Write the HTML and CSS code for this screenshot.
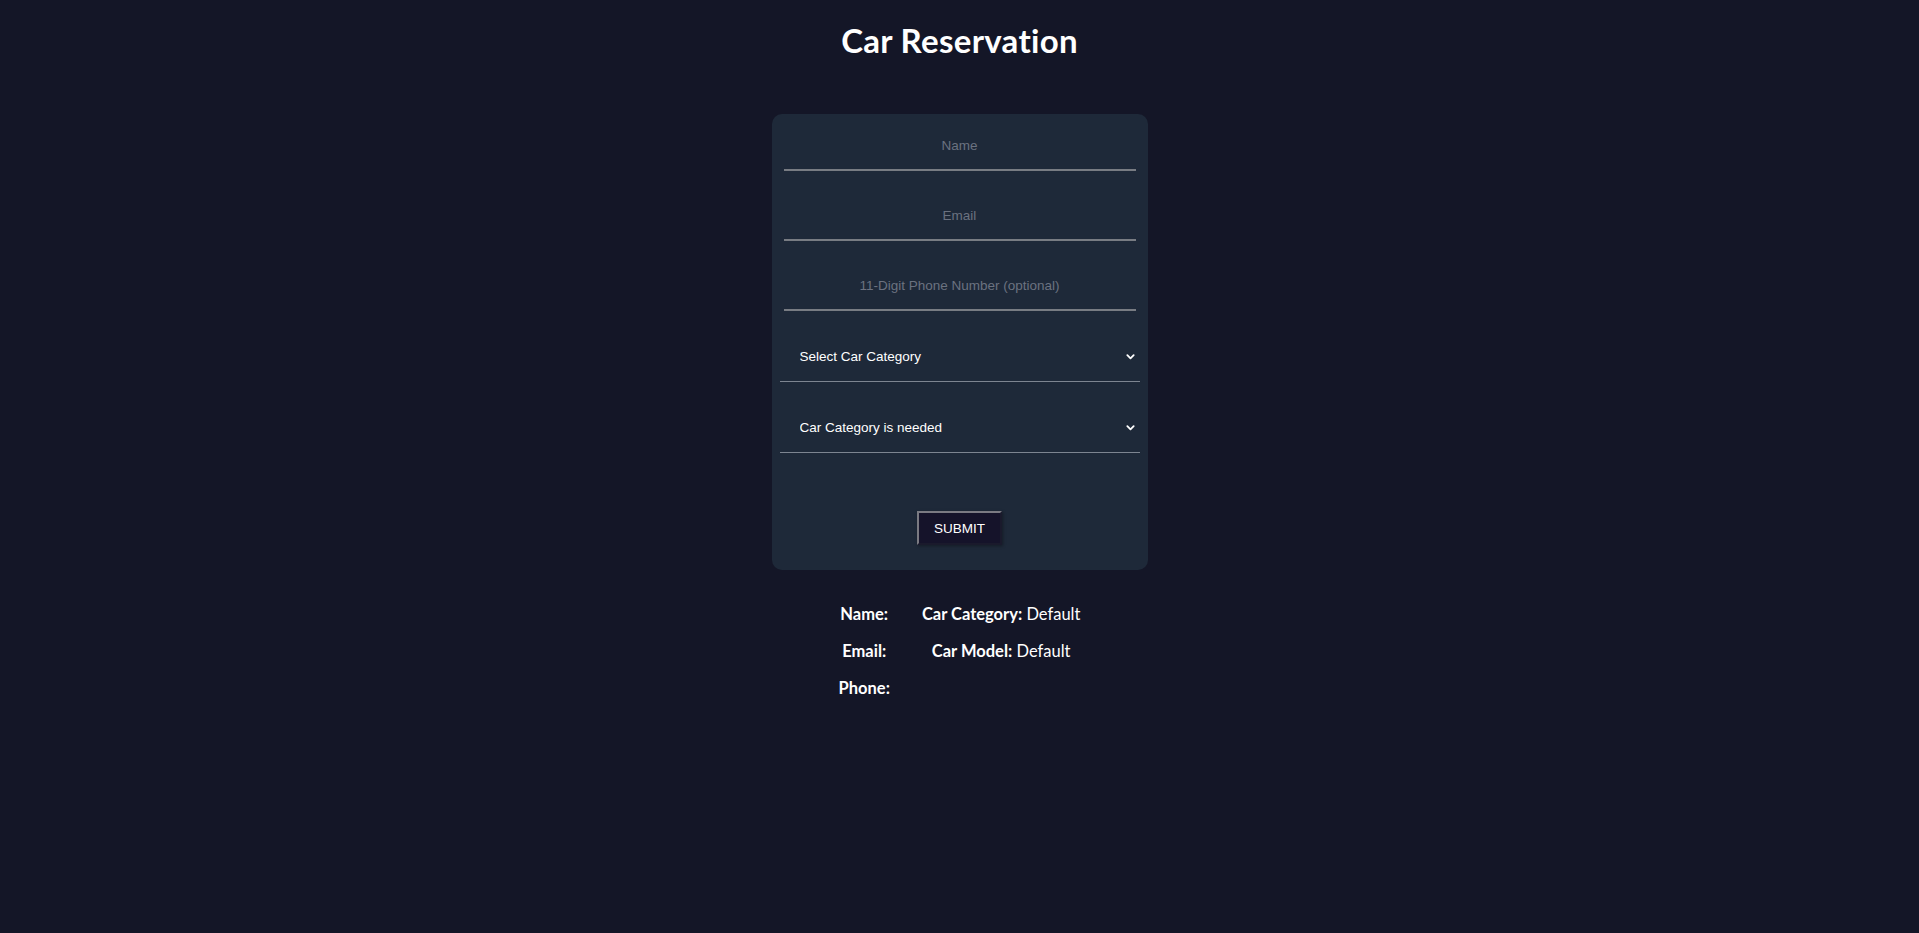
FILE: index.html
```html
<!DOCTYPE html>
<html lang="en">
<head>
<meta charset="utf-8">
<title>Car Reservation</title>
<link rel="stylesheet" href="styles.css">
</head>
<body>
<main class="page">
  <h1 class="title">Car Reservation</h1>
  <form class="card">
    <input class="field" type="text" placeholder="Name">
    <input class="field" type="email" placeholder="Email">
    <input class="field" type="tel" placeholder="11-Digit Phone Number (optional)">
    <div class="select-wrap">
      <select class="select">
        <option>Select Car Category</option>
      </select>
      <svg class="chevron" viewBox="0 0 10 6" width="10" height="6"><path d="M1.5 1 L5 4.5 L8.5 1" fill="none" stroke="#ffffff" stroke-width="2" stroke-linecap="round" stroke-linejoin="round"/></svg>
    </div>
    <div class="select-wrap">
      <select class="select">
        <option>Car Category is needed</option>
      </select>
      <svg class="chevron" viewBox="0 0 10 6" width="10" height="6"><path d="M1.5 1 L5 4.5 L8.5 1" fill="none" stroke="#ffffff" stroke-width="2" stroke-linecap="round" stroke-linejoin="round"/></svg>
    </div>
    <div class="actions">
      <button class="submit" type="button">SUBMIT</button>
    </div>
  </form>
  <section class="info">
    <div class="info-col">
      <div class="info-row"><b>Name:</b></div>
      <div class="info-row"><b>Email:</b></div>
      <div class="info-row"><b>Phone:</b></div>
    </div>
    <div class="info-col">
      <div class="info-row"><b>Car Category:</b> Default</div>
      <div class="info-row"><b>Car Model:</b> Default</div>
    </div>
  </section>
</main>
</body>
</html>
```

FILE: styles.css
```css
* { box-sizing: border-box; }

html, body {
  margin: 0;
  padding: 0;
  background: #141627;
  min-height: 100%;
}

body {
  font-family: "Segoe UI", Lato, "Open Sans", sans-serif;
  color: #ffffff;
}

.page {
  display: flex;
  flex-direction: column;
  align-items: center;
  padding-top: 18px;
}

.title {
  margin: 0;
  font-size: 33px;
  letter-spacing: 0.3px;
  line-height: 44px;
  font-weight: 700;
  color: #ffffff;
}

.card {
  margin-top: 52px;
  width: 376px;
  height: 456px;
  background: #1e2939;
  border-radius: 10px;
  padding: 10px 0 0;
  display: flex;
  flex-direction: column;
}

.field {
  display: block;
  margin: 0 12px 23px;
  height: 47px;
  width: 352px;
  background: transparent;
  border: none;
  border-bottom: 2px solid #787c83;
  outline: none;
  text-align: center;
  color: #ffffff;
  font-family: "Liberation Sans", Arial, sans-serif;
  font-size: 13.5px;
  padding: 0 0 2px;
}

.field::placeholder {
  color: #6b7280;
}

.select-wrap {
  position: relative;
  margin: 0 8px 20px;
  width: 360px;
}

.field + .select-wrap { margin-top: -3px; }

.select {
  display: block;
  width: 100%;
  height: 51px;
  appearance: none;
  -webkit-appearance: none;
  background: transparent;
  border: none;
  border-bottom: 1px solid #7d8591;
  border-radius: 0;
  color: #ffffff;
  font-family: "Liberation Sans", Arial, sans-serif;
  font-size: 13.5px;
  padding: 0 0 0 20px;
  outline: none;
}

.select option {
  background: #1e2939;
  color: #ffffff;
}

.chevron {
  position: absolute;
  right: 5px;
  top: 23px;
  width: 9px;
  height: 6px;
  pointer-events: none;
}

.actions {
  display: flex;
  justify-content: center;
  margin-top: 38px;
}

.submit {
  width: 85px;
  height: 34px;
  background: #15132a;
  color: #ffffff;
  font-family: "Liberation Sans", Arial, sans-serif;
  font-size: 13.5px;
  border-style: solid;
  border-width: 2px;
  border-color: #7a7a82 #1a1a2c #1a1a2c #7a7a82;
  padding: 0;
  box-shadow: 1px 1px 3px rgba(0, 0, 0, 0.35);
}

.info {
  margin-top: 26px;
  display: flex;
  gap: 32px;
}

.info-col {
  display: flex;
  flex-direction: column;
  text-align: center;
}

.info-row {
  height: 37px;
  line-height: 37px;
  font-size: 16.5px;
  white-space: nowrap;
}

.info-row b { font-weight: 700; }
```
